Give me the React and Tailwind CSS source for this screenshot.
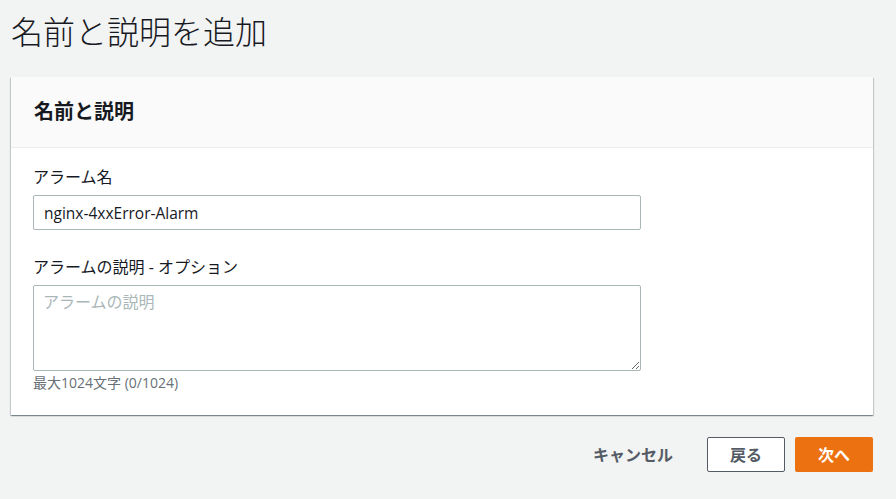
export default function App() {
  const font = { fontFamily: '"Open Sans", "Noto Sans CJK JP", sans-serif' }

  return (
    <div className="min-h-[499px] w-[896px] bg-[#f2f3f3] pl-[11px] pt-[11px] text-[#16191f]" style={font}>
      <h1 className="mb-[24px] text-[32px] font-light leading-[42px]">名前と説明を追加</h1>

      <div className="w-[862px] bg-white shadow-[0_1px_1px_0_rgba(0,28,36,0.3),1px_1px_1px_0_rgba(0,28,36,0.15),-1px_1px_1px_0_rgba(0,28,36,0.15)]">
        <div className="flex h-[71px] items-center border-b border-[#eaeded] bg-[#fafafa] px-[23px]">
          <h2 className="text-[20px] font-bold">名前と説明</h2>
        </div>

        <div className="px-[22px] pb-[23px] pt-[17px]">
          <label className="block text-[16px] leading-[24px]">アラーム名</label>
          <input
            readOnly
            value="nginx-4xxError-Alarm"
            className="mt-[6px] block h-[35px] w-[608px] rounded-[2px] border border-[#aab7b8] bg-white px-[10px] text-[15.5px] text-[#16191f] outline-none"
          />

          <label className="mt-[25px] block text-[16px] leading-[24px]">アラームの説明 - オプション</label>
          <textarea
            placeholder="アラームの説明"
            className="mt-[6px] block h-[86px] w-[608px] rounded-[2px] border border-[#aab7b8] bg-white px-[9px] py-[4px] text-[16px] leading-[24px] outline-none placeholder:text-[#aab7b8]"
          />
          <p className="mt-[3px] text-[14px] leading-[18px] text-[#687078]">最大1024文字 (0/1024)</p>
        </div>
      </div>

      <div className="mt-[22px] flex w-[862px] items-center justify-end gap-[10px]">
        <button className="mr-[24px] h-[35px] text-[16px] font-bold text-[#545b64]">キャンセル</button>
        <button className="h-[35px] w-[78px] rounded-[2px] border border-[#545b64] bg-white text-[16px] font-bold text-[#545b64]">
          戻る
        </button>
        <button className="h-[35px] w-[78px] rounded-[2px] bg-[#ec7211] text-[16px] font-bold text-white">次へ</button>
      </div>
    </div>
  )
}
